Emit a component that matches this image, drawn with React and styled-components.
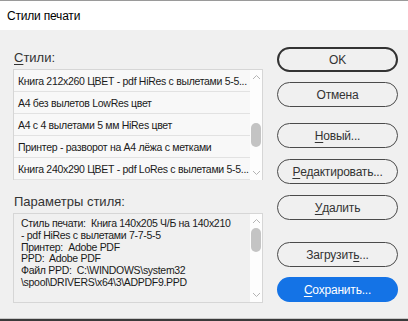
import styled, { createGlobalStyle } from 'styled-components'

const Global = createGlobalStyle`
    html, body {
        margin: 0;
        padding: 0;
        background: #f0f0f0;
    }
    * {
        box-sizing: border-box;
    }
`;

const styles = [
    'Книга 212x260 ЦВЕТ - pdf HiRes с вылетами 5-5...',
    'А4 без вылетов LowRes цвет',
    'А4 с 4 вылетами 5 мм HiRes цвет',
    'Принтер - разворот на А4 лёжа с метками',
    'Книга 240x290 ЦВЕТ - pdf LoRes с вылетами 5-5...',
];

const params = [
    'Стиль печати:  Книга 140x205 Ч/Б на 140x210',
    '- pdf HiRes с вылетами 7-7-5-5',
    'Принтер:  Adobe PDF',
    'PPD:  Adobe PDF',
    'Файл PPD:  C:\\WINDOWS\\system32',
    '\\spool\\DRIVERS\\x64\\3\\ADPDF9.PPD',
];

function Chevron({ down }) {
    return (
        <svg width="9" height="6" viewBox="0 0 9 6">
            <path
                d={down ? 'M1 1 L4.5 4.5 L8 1' : 'M1 5 L4.5 1.5 L8 5'}
                fill="none"
                stroke="#b4b4b4"
                strokeWidth="1"
            />
        </svg>
    );
}

export default function App() {
    return (
        <>
            <Global />
            <Window>
                <TitleBar>Стили печати</TitleBar>
                <Body>
                    <Left>
                        <Label><u>С</u>тили:</Label>
                        <List>
                            <Rows>
                                {styles.map((s) => (
                                    <Row key={s}>{s}</Row>
                                ))}
                            </Rows>
                            <Scroll>
                                <Chevron />
                                <Track>
                                    <Thumb $top={43} $height={24} />
                                </Track>
                                <Chevron down />
                            </Scroll>
                        </List>
                        <Label $gap={14}>Параметры стиля:</Label>
                        <Params>
                            <ParamText>
                                {params.map((p) => (
                                    <div key={p}>{p}</div>
                                ))}
                            </ParamText>
                            <Scroll>
                                <Chevron />
                                <Track>
                                    <Thumb $top={4} $height={24} />
                                </Track>
                                <Chevron down />
                            </Scroll>
                        </Params>
                    </Left>
                    <Right>
                        <Button $primary>OK</Button>
                        <Button $mt={10}>Отмена</Button>
                        <Button $mt={16}><u>Н</u>овый...</Button>
                        <Button $mt={11}><u>Р</u>едактировать...</Button>
                        <Button $mt={11}><u>У</u>далить</Button>
                        <Button $mt={22}>Загрузит<u>ь</u>...</Button>
                        <Button $mt={10} $blue><u>С</u>охранить...</Button>
                    </Right>
                </Body>
                <Bottom />
            </Window>
        </>
    )
}

const Window = styled.div`
    width: 408px;
    height: 321px;
    overflow: hidden;
    display: flex;
    flex-direction: column;
    font-family: "Liberation Sans", Arial, sans-serif;
    background: #f0f0f0;
`;
const TitleBar = styled.div`
    height: 30px;
    flex-shrink: 0;
    background: #ffffff;
    border-top: 1px solid #9a9a9a;
    display: flex;
    align-items: center;
    padding-left: 7px;
    font-size: 12px;
    letter-spacing: -0.2px;
    color: #000000;
`;
const Body = styled.div`
    flex: 1;
    display: flex;
    padding-left: 13px;
    gap: 14px;
`;
const Left = styled.div`
    width: 250px;
    display: flex;
    flex-direction: column;
    padding-top: 20px;
`;
const Label = styled.div`
    font-size: 13px;
    line-height: 16px;
    color: #333333;
    margin-top: ${(p) => p.$gap || 0}px;
    margin-bottom: 3px;
    padding-left: 1px;
    u {
        text-decoration-thickness: 1px;
        text-underline-offset: 2px;
    }
`;
const List = styled.div`
    height: 111px;
    display: flex;
    border: 1px solid #d6d6d6;
    border-bottom: none;
    background: #f8f8f8;
`;
const Rows = styled.div`
    flex: 1;
    min-width: 0;
`;
const Row = styled.div`
    height: 22px;
    line-height: 23px;
    padding-left: 4px;
    padding-right: 2px;
    font-size: 10.5px;
    letter-spacing: -0.3px;
    color: #1a1a1a;
    border-bottom: 1px solid #e2e2e2;
    white-space: nowrap;
    overflow: hidden;
`;
const Scroll = styled.div`
    width: 12px;
    background: #fdfdfd;
    display: flex;
    flex-direction: column;
    align-items: center;
    padding: 4px 0 4px;
`;
const Track = styled.div`
    flex: 1;
    width: 100%;
    position: relative;
`;
const Thumb = styled.div`
    position: absolute;
    left: 1px;
    right: 1px;
    top: ${(p) => p.$top}px;
    height: ${(p) => p.$height}px;
    border-radius: 5px;
    background: #c4c4c4;
`;
const Params = styled.div`
    height: 90px;
    display: flex;
    border: 1px solid #d6d6d6;
    background: #f0f0f0;
`;
const ParamText = styled.div`
    flex: 1;
    padding: 4px 0 0 7px;
    font-size: 10.5px;
    letter-spacing: -0.3px;
    line-height: 11.8px;
    color: #1a1a1a;
    white-space: pre;
`;
const Right = styled.div`
    width: 121px;
    display: flex;
    flex-direction: column;
    padding-top: 17px;
`;
const Button = styled.div`
    height: 25px;
    margin-top: ${(p) => p.$mt || 0}px;
    border-radius: 13px;
    border: ${(p) => (p.$primary ? '2px solid #333333' : p.$blue ? 'none' : '1px solid #4a4a4a')};
    background: ${(p) => (p.$blue ? '#1473e6' : 'transparent')};
    color: ${(p) => (p.$blue ? '#ffffff' : '#333333')};
    display: flex;
    align-items: center;
    justify-content: center;
    font-size: 12px;
    letter-spacing: -0.2px;
    u {
        text-decoration-thickness: 1px;
        text-underline-offset: 2px;
    }
`;
const Bottom = styled.div`
    height: 3px;
    flex-shrink: 0;
    border-top: 1px solid #c8c8c8;
    background: #3a3a3a;
`;
